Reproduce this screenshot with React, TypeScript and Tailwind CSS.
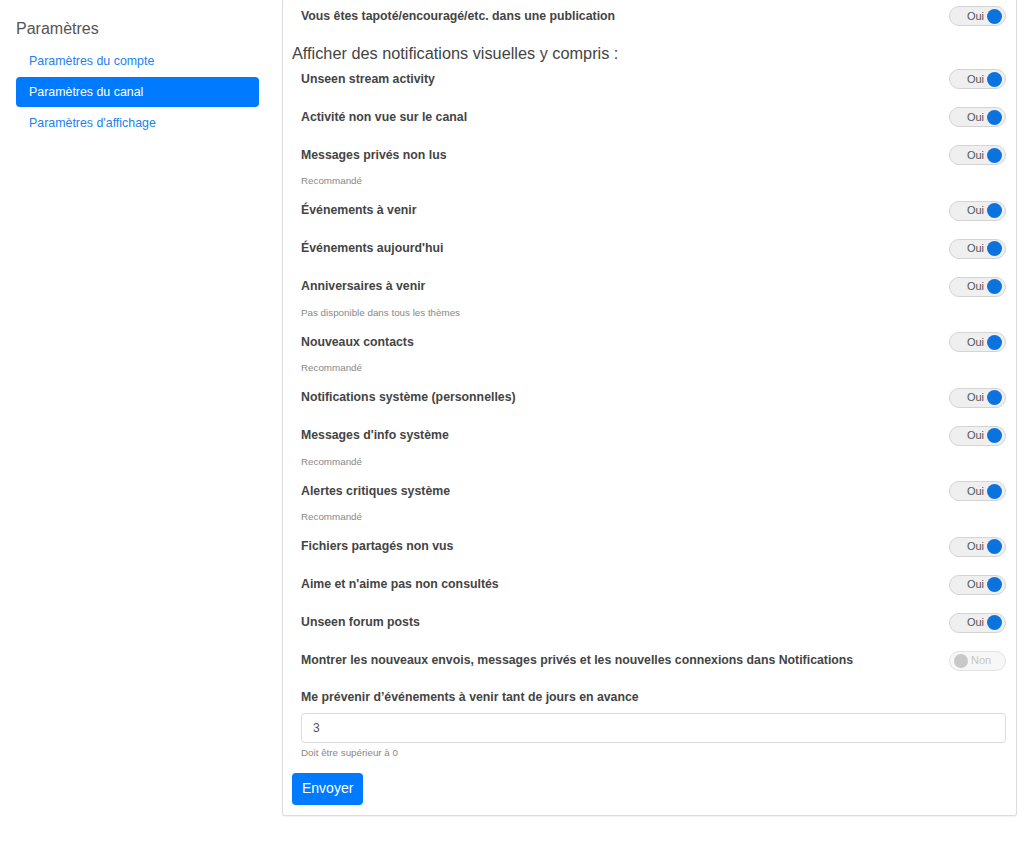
import React from "react";

type Item = { label: string; on: boolean; help?: string };

const items: Item[] = [
  { label: "Unseen stream activity", on: true },
  { label: "Activité non vue sur le canal", on: true },
  { label: "Messages privés non lus", on: true, help: "Recommandé" },
  { label: "Événements à venir", on: true },
  { label: "Événements aujourd'hui", on: true },
  { label: "Anniversaires à venir", on: true, help: "Pas disponible dans tous les thèmes" },
  { label: "Nouveaux contacts", on: true, help: "Recommandé" },
  { label: "Notifications système (personnelles)", on: true },
  { label: "Messages d'info système", on: true, help: "Recommandé" },
  { label: "Alertes critiques système", on: true, help: "Recommandé" },
  { label: "Fichiers partagés non vus", on: true },
  { label: "Aime et n'aime pas non consultés", on: true },
  { label: "Unseen forum posts", on: true },
  {
    label: "Montrer les nouveaux envois, messages privés et les nouvelles connexions dans Notifications",
    on: false,
  },
];

const links = ["Paramètres du compte", "Paramètres du canal", "Paramètres d'affichage"];

function Toggle({ on }: { on: boolean }) {
  if (!on) {
    return (
      <div className="flex h-[20px] w-[57px] items-center gap-[3px] rounded-full border border-[#e2e2e2] bg-[#f7f7f7] pl-[4px]">
        <span className="h-[14px] w-[14px] rounded-full bg-[#c8c8c8]" />
        <span className="text-[11px] leading-none text-[#c4c4c4]">Non</span>
      </div>
    );
  }
  return (
    <div className="flex h-[20px] w-[57px] items-center justify-end gap-[3px] rounded-full border border-[#d4d4d4] bg-[#efefef] pr-[3px]">
      <span className="text-[11px] leading-none text-[#555]">Oui</span>
      <span className="h-[15px] w-[15px] rounded-full bg-[#0b72de]" />
    </div>
  );
}

function Row({ label, on }: { label: string; on: boolean }) {
  return (
    <div className="flex h-[38px] items-center justify-between pl-[9px]">
      <span className="text-[12.3px] font-bold text-[#444]">{label}</span>
      <Toggle on={on} />
    </div>
  );
}

export default function App() {
  return (
    <div
      className="flex min-h-[843px] bg-white pl-[16px] pr-[7px]"
      style={{ fontFamily: '"Liberation Sans", Arial, sans-serif' }}
    >
      <aside className="w-[243px] shrink-0 pt-[19px]">
        <h2 className="text-[16px] leading-[20px] text-[#555]">Paramètres</h2>
        <ul className="mt-[7px] flex flex-col gap-[1px]">
          {links.map((l, i) => (
            <li
              key={l}
              className={
                i === 1
                  ? "flex h-[30px] items-center rounded-[4px] bg-[#007bff] pl-[13px] text-[12.4px] text-white"
                  : "flex h-[30px] items-center pl-[13px] text-[12.4px] text-[#1a82f0]"
              }
            >
              {l}
            </li>
          ))}
        </ul>
      </aside>

      <main className="ml-[23px] h-[816px] flex-1 rounded-b-[3px] border-x border-b border-[#dcdcdc] pl-[9px] pr-[10px] pb-[10px] shadow-[0_1px_2px_rgba(0,0,0,0.06)]">
        <div className="flex h-[32px] items-center justify-between pl-[9px]">
          <span className="text-[12.3px] font-bold text-[#444]">
            Vous êtes tapoté/encouragé/etc. dans une publication
          </span>
          <Toggle on />
        </div>

        <div className="h-[28px] pt-[12px] text-[16.3px] leading-[18px] text-[#444]">
          Afficher des notifications visuelles y compris :
        </div>

        {items.map((it) => (
          <div key={it.label}>
            <Row label={it.label} on={it.on} />
            {it.help && (
              <div className="h-[17.5px] pl-[9px] text-[9.8px] leading-[14px] text-[#888]">{it.help}</div>
            )}
          </div>
        ))}

        <div className="ml-[9px] mt-[8px] text-[12.3px] font-bold leading-[18px] text-[#444]">
          Me prévenir d’événements à venir tant de jours en avance
        </div>
        <div className="ml-[9px] mt-[7px] flex h-[30px] items-center rounded-[4px] border border-[#dcdcdc] pl-[11px] text-[12px] text-[#555]">
          3
        </div>
        <div className="ml-[9px] mt-[3px] text-[9.8px] leading-[14px] text-[#888]">Doit être supérieur à 0</div>
        <button className="mt-[13px] h-[32px] rounded-[4px] bg-[#007bff] px-[10px] text-[14px] text-white">
          Envoyer
        </button>
      </main>
    </div>
  );
}
